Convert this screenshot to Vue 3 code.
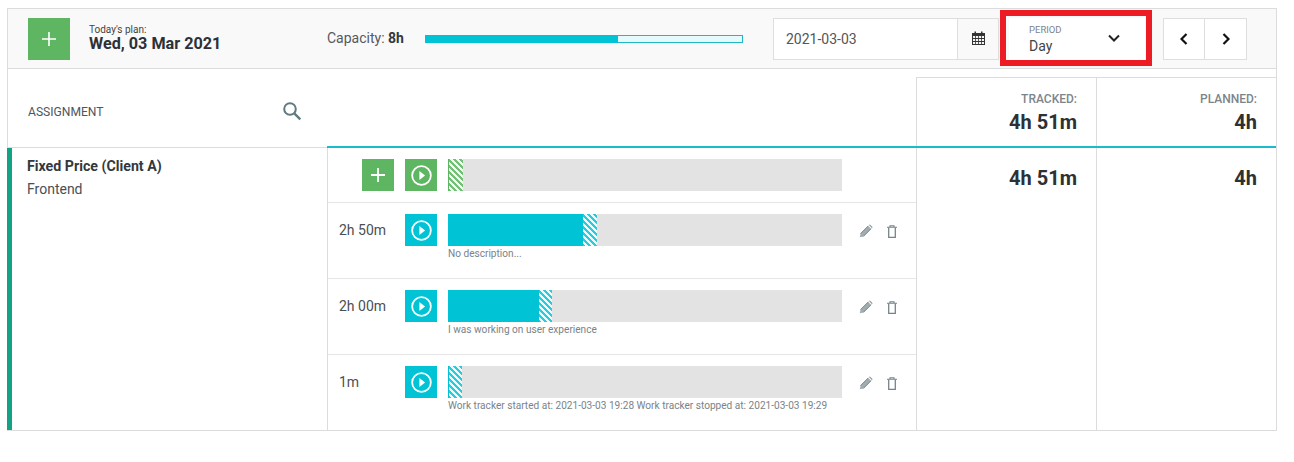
<script setup>
const rows = [
  { time: '2h 50m', fill: 135, hatch: 14, note: 'No description...' },
  { time: '2h 00m', fill: 91, hatch: 13, note: 'I was working on user experience' },
  { time: '1m', fill: 0, hatch: 14, note: 'Work tracker started at: 2021-03-03 19:28 Work tracker stopped at: 2021-03-03 19:29' },
]
</script>

<template>
  <div class="page">
    <div class="panel">
      <!-- toolbar -->
      <div class="toolbar">
        <button class="add-btn">
          <svg width="16" height="16" viewBox="0 0 16 16"><path d="M8 1v14M1 8h14" stroke="#fff" stroke-width="1.6" fill="none" /></svg>
        </button>
        <div class="plan">
          <div class="plan-label">Today's plan:</div>
          <div class="plan-date">Wed, 03 Mar 2021</div>
        </div>
        <div class="capacity">Capacity: <b>8h</b></div>
        <div class="cap-bar"><div class="cap-fill"></div></div>
        <div class="date-input">2021-03-03</div>
        <div class="cal-btn">
          <svg width="13" height="14" viewBox="0 0 13 14">
            <path d="M0 2h13v12H0z" fill="#333" />
            <path d="M2.500 0.500h1.500v3H2.500zM9 0.500h1.500v3H9z" fill="#333" />
            <path d="M1 5h2.200v2H1zM4 5h2.200v2H4zM7 5h2.200v2H7zM10 5h2v2h-2zM1 8h2.200v2H1zM4 8h2.200v2H4zM7 8h2.200v2H7zM10 8h2v2h-2zM1 11h2.200v2H1zM4 11h2.200v2H4zM7 11h2.200v2H7zM10 11h2v2h-2z" fill="#f4f4f4" />
          </svg>
        </div>
        <div class="period">
          <div>
            <div class="period-label">PERIOD</div>
            <div class="period-value">Day</div>
          </div>
          <svg class="chev-down" width="12" height="8" viewBox="0 0 12 8"><path d="M1 1.500l5 5 5-5" stroke="#222" stroke-width="2" fill="none" /></svg>
        </div>
        <div class="nav">
          <div class="nav-btn"><svg width="8" height="12" viewBox="0 0 8 12"><path d="M6.500 1L1.500 6l5 5" stroke="#111" stroke-width="2.200" fill="none" /></svg></div>
          <div class="nav-btn"><svg width="8" height="12" viewBox="0 0 8 12"><path d="M1.500 1l5 5-5 5" stroke="#111" stroke-width="2.200" fill="none" /></svg></div>
        </div>
      </div>

      <!-- header -->
      <div class="head">
        <div class="head-assign">
          <span>ASSIGNMENT</span>
          <svg width="19" height="19" viewBox="0 0 19 19"><circle cx="7" cy="7" r="5.800" stroke="#5f7a80" stroke-width="2" fill="none" /><path d="M11.300 11.300l6 6" stroke="#5f7a80" stroke-width="2.400" fill="none" /></svg>
        </div>
        <div class="head-gap"></div>
        <div class="head-total">
          <div class="total-label">TRACKED:</div>
          <div class="total-value">4h 51m</div>
        </div>
        <div class="head-total">
          <div class="total-label">PLANNED:</div>
          <div class="total-value">4h</div>
        </div>
      </div>

      <!-- body -->
      <div class="body">
        <div class="assign">
          <div class="assign-name">Fixed Price (Client A)</div>
          <div class="assign-sub">Frontend</div>
        </div>
        <div class="entries">
          <div class="entry entry-top">
            <div class="time"></div>
            <button class="sq green plus">
              <svg width="14" height="14" viewBox="0 0 14 14"><path d="M7 0v14M0 7h14" stroke="#fff" stroke-width="1.800" fill="none" /></svg>
            </button>
            <button class="sq green">
              <svg width="21" height="21" viewBox="0 0 20 20"><circle cx="10" cy="10" r="8.900" stroke="#fff" stroke-width="1.700" fill="none" /><path d="M8 5.800l5.400 4.200-5.400 4.200z" fill="#fff" /></svg>
            </button>
            <div class="track">
              <div class="hatch hatch-green" style="width: 15px"></div>
            </div>
          </div>
          <div v-for="r in rows" :key="r.time" class="entry">
            <div class="time">{{ r.time }}</div>
            <button class="sq cyan">
              <svg width="21" height="21" viewBox="0 0 20 20"><circle cx="10" cy="10" r="8.900" stroke="#fff" stroke-width="1.700" fill="none" /><path d="M8 5.800l5.400 4.200-5.400 4.200z" fill="#fff" /></svg>
            </button>
            <div class="track-wrap">
              <div class="track">
                <div class="fill" :style="{ width: r.fill + 'px' }"></div>
                <div class="hatch hatch-cyan" :class="{ edge: !r.fill }" :style="{ width: r.hatch + 'px' }"></div>
              </div>
              <div class="note">{{ r.note }}</div>
            </div>
            <div class="actions">
              <svg width="14" height="14" viewBox="0 0 14 14"><path d="M.8 13.200l.8-3.600 7.700-7.700 2.800 2.800-7.700 7.700z" fill="#a3adb1" /><path d="M1.600 9.600l7.700-7.700M4.400 12.400l7.700-7.700" stroke="#76848a" stroke-width="1" fill="none" /><path d="M10.100 1.100l.7-.7 2.800 2.800-.7.7z" fill="#76848a" /></svg>
              <svg width="10" height="13" viewBox="0 0 10 13"><path d="M0 2.200h10M3 2.200V.7h4v1.500" stroke="#76848a" stroke-width="1.100" fill="none" /><path d="M1.700 2.500v9.800h6.600V2.500" stroke="#76848a" stroke-width="1.300" fill="none" /></svg>
            </div>
          </div>
        </div>
        <div class="sum">4h 51m</div>
        <div class="sum">4h</div>
      </div>
    </div>

    <!-- annotation drawn over the screenshot -->
    <div class="marker"></div>
  </div>
</template>

<style scoped>
.page {
  position: relative;
  width: 1294px;
  height: 462px;
  padding: 8px 17px 0 7px;
  box-sizing: border-box;
  font-family: Roboto, "Liberation Sans", sans-serif;
  color: #2b3034;
  overflow: hidden;
}

.panel {
  height: 423px;
  border: 1px solid #dcdcdc;
  box-sizing: border-box;
  display: flex;
  flex-direction: column;
}

button {
  border: none;
  padding: 0;
  display: flex;
  align-items: center;
  justify-content: center;
}

/* toolbar */
.toolbar {
  height: 60px;
  flex-shrink: 0;
  box-sizing: border-box;
  display: flex;
  align-items: center;
  padding-left: 20px;
  background: #f9f9f9;
  border-bottom: 1px solid #dcdcdc;
}

.add-btn {
  width: 42px;
  height: 42px;
  background: #5fb662;
  flex-shrink: 0;
}

.plan {
  width: 238px;
  margin-left: 19px;
  flex-shrink: 0;
}

.plan-label {
  font-size: 10px;
  line-height: 11px;
  color: #444;
}

.plan-date {
  font-size: 16.200px;
  line-height: 18px;
  font-weight: 700;
  color: #2d3135;
}

.capacity {
  width: 98px;
  margin-top: -2px;
  font-size: 14px;
  color: #55595d;
  flex-shrink: 0;
}

.capacity b {
  font-weight: 700;
  color: #33383c;
}

.cap-bar {
  width: 318px;
  height: 8px;
  box-sizing: border-box;
  background: #e6f9fb;
  border: 1px solid #20b8c4;
  flex-shrink: 0;
}

.cap-fill {
  width: 193px;
  height: 8px;
  margin: -1px 0 0 -1px;
  background: #00c3d5;
}

.date-input {
  width: 185px;
  height: 42px;
  margin-left: 30px;
  box-sizing: border-box;
  padding-left: 12px;
  line-height: 40px;
  background: #fff;
  border: 1px solid #dedede;
  font-size: 14px;
  color: #555;
  flex-shrink: 0;
}

.cal-btn {
  width: 41px;
  height: 42px;
  box-sizing: border-box;
  padding-bottom: 2px;
  background: #f9f9f9;
  border: 1px solid #dedede;
  border-left: none;
  display: flex;
  align-items: center;
  justify-content: center;
  flex-shrink: 0;
}

.period {
  width: 136px;
  height: 42px;
  margin-left: 10px;
  box-sizing: border-box;
  padding: 0 25px 0 20px;
  background: #fff;
  display: flex;
  align-items: center;
  justify-content: space-between;
  flex-shrink: 0;
}

.period-label {
  font-size: 9.500px;
  line-height: 11px;
  color: #7b858c;
}

.period-value {
  margin-top: 3px;
  font-size: 14px;
  line-height: 16px;
  color: #444;
}

.chev-down {
  margin-top: -2px;
}

.nav {
  display: flex;
  margin-left: 18px;
  flex-shrink: 0;
}

.nav-btn {
  width: 42px;
  height: 42px;
  box-sizing: border-box;
  background: #fff;
  border: 1px solid #dedede;
  display: flex;
  align-items: center;
  justify-content: center;
}

.nav-btn + .nav-btn {
  border-left: none;
}

/* header */
.head {
  height: 79px;
  flex-shrink: 0;
  display: flex;
  align-items: flex-end;
  box-sizing: border-box;
  border-bottom: 2px solid #18bccb;
}

.head-assign {
  width: 319px;
  height: 78px;
  margin-bottom: -2px;
  box-sizing: border-box;
  padding: 6px 25px 0 20px;
  display: flex;
  align-items: center;
  justify-content: space-between;
  background: #fff;
  border-bottom: 1px solid #dcdcdc;
  font-size: 12.100px;
  color: #50555a;
  flex-shrink: 0;
}

.head-gap {
  width: 589px;
  flex-shrink: 0;
}

.head-total {
  width: 180px;
  height: 69px;
  box-sizing: border-box;
  padding: 14px 19px 0 0;
  border-left: 1px solid #dcdcdc;
  border-top: 1px solid #dcdcdc;
  text-align: right;
  flex-shrink: 0;
}

.total-label {
  font-size: 12px;
  line-height: 14px;
  color: #7b858c;
  font-weight: 500;
}

.total-value,
.sum {
  font-size: 20px;
  font-weight: 700;
  color: #2d3135;
}

.total-value {
  margin-top: 4px;
  line-height: 24px;
}

/* body */
.body {
  flex: 1;
  display: flex;
  min-height: 0;
}

.assign {
  width: 319px;
  box-sizing: border-box;
  padding: 9px 0 0 15px;
  border-left: 5px solid #13a384;
  margin-left: -1px;
  flex-shrink: 0;
  margin-right: 1px;
}

.assign-name {
  font-size: 14.200px;
  line-height: 18px;
  font-weight: 700;
  color: #33383c;
}

.assign-sub {
  margin-top: 5px;
  font-size: 14px;
  line-height: 18px;
  color: #4a4f53;
}

.entries {
  width: 589px;
  box-sizing: border-box;
  border-left: 1px solid #dcdcdc;
  flex-shrink: 0;
}

.entry {
  height: 76px;
  box-sizing: border-box;
  padding: 11px 0 0 11px;
  display: flex;
  border-bottom: 1px solid #e6e6e6;
}

.entry:last-child {
  border-bottom: none;
}

.entry-top {
  height: 55px;
}

.time {
  width: 66px;
  height: 32px;
  line-height: 33px;
  font-size: 14px;
  color: #4a4f53;
  flex-shrink: 0;
}

.entry-top .time {
  width: 23px;
}

.sq {
  width: 32px;
  height: 32px;
  flex-shrink: 0;
}

.plus {
  margin-right: 11px;
}

.green {
  background: #5fb662;
}

.cyan {
  background: #00c3d5;
}

.track-wrap {
  margin-left: 11px;
  width: 394px;
  flex-shrink: 0;
}

.entry-top .track {
  margin-left: 11px;
}

.track {
  width: 394px;
  height: 32px;
  background: #e3e3e3;
  display: flex;
}

.fill {
  height: 32px;
  background: #00c3d5;
}

.hatch {
  height: 32px;
  box-sizing: border-box;
}

.hatch-green {
  border-left: 1px solid #5fb662;
  background: repeating-linear-gradient(45deg, #74bf77 0 2.100px, #f0f8f0 2.100px 4.200px);
}

.hatch-cyan {
  background: repeating-linear-gradient(45deg, #2accdb 0 2.100px, #e8fafb 2.100px 4.200px);
}

.hatch-cyan.edge {
  border-left: 1px solid #00c3d5;
}

.note {
  margin-top: 2px;
  font-size: 10.100px;
  line-height: 12px;
  color: #79838a;
  white-space: nowrap;
}

.actions {
  margin-left: 17px;
  display: flex;
  align-items: center;
  gap: 14px;
  height: 34px;
}

.sum {
  width: 180px;
  height: 100%;
  box-sizing: border-box;
  padding: 18px 19px 0 0;
  line-height: 24px;
  text-align: right;
  border-left: 1px solid #dcdcdc;
  flex-shrink: 0;
}

.marker {
  position: absolute;
  left: 1000px;
  top: 10px;
  width: 152px;
  height: 56px;
  box-sizing: border-box;
  border: 6px solid #ed1c24;
}
</style>
